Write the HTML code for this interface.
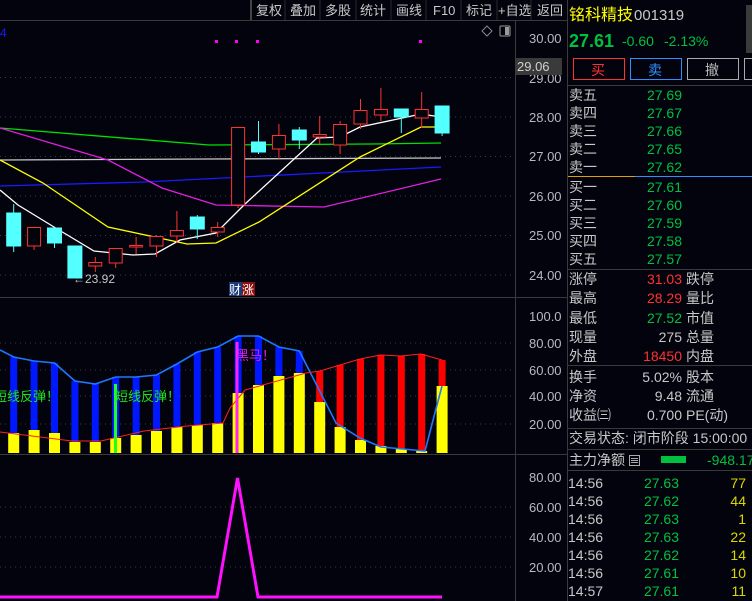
<!DOCTYPE html>
<html><head><meta charset="utf-8"><style>
html,body{margin:0;padding:0;background:#03030d;width:752px;height:601px;overflow:hidden}
svg{display:block}
text{font-family:"Liberation Sans","Noto Sans CJK SC",sans-serif}
</style></head><body>
<svg width="752" height="601" viewBox="0 0 752 601" xmlns="http://www.w3.org/2000/svg">
<rect width="752" height="601" fill="#03030d"/>
<!-- toolbar -->
<line x1="0" y1="20.5" x2="567" y2="20.5" stroke="#3a3a3a"/>
<line x1="251" y1="0" x2="251" y2="20" stroke="#444" stroke-width="2"/>
<g fill="#c8c8c8" font-size="13">
<text x="256" y="15">复权</text><text x="290" y="15">叠加</text><text x="325" y="15">多股</text><text x="360" y="15">统计</text><text x="396" y="15">画线</text><text x="433" y="15">F10</text><text x="466" y="15">标记</text><text x="498" y="15">+自选</text><text x="537" y="15">返回</text>
</g>
<g stroke="#2a2a2a"><line x1="285" y1="0" x2="285" y2="20"/><line x1="320" y1="0" x2="320" y2="20"/><line x1="356" y1="0" x2="356" y2="20"/><line x1="391" y1="0" x2="391" y2="20"/><line x1="426" y1="0" x2="426" y2="20"/><line x1="461" y1="0" x2="461" y2="20"/><line x1="497" y1="0" x2="497" y2="20"/><line x1="531" y1="0" x2="531" y2="20"/></g>
<text x="0" y="37" fill="#1a1aff" font-size="12">4</text>
<!-- axis divider -->
<line x1="515.5" y1="20" x2="515.5" y2="601" stroke="#3a3a3a"/>
<line x1="0" y1="297.5" x2="567" y2="297.5" stroke="#3a3a3a"/>
<line x1="0" y1="454.5" x2="567" y2="454.5" stroke="#3a3a3a"/>
<!-- icons -->
<path d="M487 26 L492 31 L487 36 L482 31 Z" fill="none" stroke="#888"/>
<rect x="500" y="26" width="10" height="10" fill="none" stroke="#999" rx="1"/><rect x="505" y="27" width="4" height="8" fill="#999"/>
<!-- grid -->
<g stroke="#3a3a3a" stroke-dasharray="1,4">
<line x1="0" y1="77.5" x2="512" y2="77.5"/><line x1="0" y1="117" x2="512" y2="117"/><line x1="0" y1="156.5" x2="512" y2="156.5"/><line x1="0" y1="196" x2="512" y2="196"/><line x1="0" y1="235.5" x2="512" y2="235.5"/><line x1="0" y1="275" x2="512" y2="275"/>
<line x1="0" y1="343" x2="512" y2="343"/><line x1="0" y1="370" x2="512" y2="370"/><line x1="0" y1="396" x2="512" y2="396"/><line x1="0" y1="424" x2="512" y2="424"/>
<line x1="0" y1="507" x2="512" y2="507"/><line x1="0" y1="537" x2="512" y2="537"/><line x1="0" y1="567" x2="512" y2="567"/>
</g>
<g fill="#b8b8c0" font-size="13">
<text x="529" y="43">30.00</text><text x="529" y="122">28.00</text><text x="529" y="161">27.00</text><text x="529" y="201">26.00</text><text x="529" y="240">25.00</text><text x="529" y="280">24.00</text>
<text x="529" y="321">100.0</text><text x="529" y="348">80.00</text><text x="529" y="375">60.00</text><text x="529" y="401">40.00</text><text x="529" y="429">20.00</text>
<text x="529" y="482">80.00</text><text x="529" y="512">60.00</text><text x="529" y="542">40.00</text><text x="529" y="572">20.00</text>
</g>
<text x="529" y="83" fill="#b8b8c0" font-size="13">29.00</text>
<rect x="516" y="58" width="46" height="17" fill="#3a3a3a"/>
<text x="517" y="71" fill="#d0d0d0" font-size="13">29.06</text>
<!-- magenta dots -->
<g fill="#ff00ff"><rect x="215" y="40" width="3" height="3"/><rect x="235" y="40" width="3" height="3"/><rect x="256" y="40" width="3" height="3"/><rect x="419" y="40" width="3" height="3"/></g>
<!-- MAs -->
<g fill="none" stroke-width="1.3">
<polyline stroke="#00e000" points="0,128 209,145 371,144 441,143"/>
<polyline stroke="#c8c8c8" points="0,160 207,159 441,158"/>
<polyline stroke="#1a1aff" points="0,186 144,182 441,167"/>
<polyline stroke="#e020e0" points="0,128 108,160 162,188 216,205 324,207 441,179"/>
<polyline stroke="#ffff00" points="0,160 43,183 108,227 187,244 216,243 259,222 360,157 421,127 441,127"/>
<polyline stroke="#ffffff" points="0,190 18,205 54,227 94,251 133,255 155,254 180,240 216,233 245,204 317,138 340,137 360,127 421,114 441,117"/>
</g>
<!-- candles -->
<g stroke="#54ffff" fill="#54ffff">
<line x1="13.7" y1="204" x2="13.7" y2="252"/><rect x="6.7" y="213" width="14" height="33"/>
<line x1="54.5" y1="228" x2="54.5" y2="248"/><rect x="47.5" y="228" width="14" height="15"/>
<line x1="74.9" y1="246" x2="74.9" y2="278"/><rect x="67.9" y="246" width="14" height="32"/>
<line x1="197.3" y1="215" x2="197.3" y2="239"/><rect x="190.3" y="217" width="14" height="12"/>
<line x1="258.5" y1="121" x2="258.5" y2="154"/><rect x="251.5" y="142" width="14" height="10"/>
<line x1="299.3" y1="127" x2="299.3" y2="149"/><rect x="292.3" y="130" width="14" height="10"/>
<line x1="401.3" y1="109" x2="401.3" y2="133"/><rect x="394.3" y="109" width="14" height="8"/>
<line x1="442.1" y1="106" x2="442.1" y2="136"/><rect x="435.1" y="106" width="14" height="27"/>
</g>
<g stroke="#ff3232" fill="#03030d">
<line x1="34.1" y1="227" x2="34.1" y2="250"/><rect x="27.6" y="227.5" width="13" height="18.5"/>
<line x1="95.3" y1="257" x2="95.3" y2="272"/><rect x="88.8" y="262.5" width="13" height="3.5"/>
<line x1="115.7" y1="248" x2="115.7" y2="268"/><rect x="109.2" y="248.5" width="13" height="14.5"/>
<line x1="136.1" y1="237" x2="136.1" y2="254"/><rect x="129.6" y="245.5" width="13" height="1.5"/>
<line x1="156.5" y1="235" x2="156.5" y2="257"/><rect x="150" y="236.5" width="13" height="9.5"/>
<line x1="176.9" y1="211" x2="176.9" y2="243"/><rect x="170.4" y="230.5" width="13" height="5.5"/>
<line x1="217.7" y1="222" x2="217.7" y2="237"/><rect x="211.2" y="227.5" width="13" height="4.5"/>
<line x1="238.1" y1="205" x2="238.1" y2="208"/><rect x="231.6" y="127.5" width="13" height="77.5"/>
<line x1="278.9" y1="124" x2="278.9" y2="159"/><rect x="272.4" y="135.5" width="13" height="13.5"/>
<line x1="319.7" y1="116" x2="319.7" y2="144"/><rect x="313.2" y="134.5" width="13" height="2.5"/>
<line x1="340.1" y1="121" x2="340.1" y2="154"/><rect x="333.6" y="124.5" width="13" height="20.5"/>
<line x1="360.5" y1="99" x2="360.5" y2="129"/><rect x="354" y="110.5" width="13" height="13.5"/>
<line x1="380.9" y1="88" x2="380.9" y2="121"/><rect x="374.4" y="109.5" width="13" height="5.5"/>
<line x1="421.7" y1="92" x2="421.7" y2="128"/><rect x="415.2" y="109.5" width="13" height="8.5"/>
</g>
<text x="73" y="283" fill="#c8c8c8" font-size="12">←23.92</text>
<rect x="229" y="282" width="13" height="14" fill="#1a3a7a"/><rect x="242" y="282" width="13" height="14" fill="#8a1010"/>
<text x="229" y="294" fill="#fff" font-size="12">财</text><text x="242" y="294" fill="#fff" font-size="12">涨</text>
<!-- panel 2 -->
<g fill="#0018ff">
<rect x="10.2" y="357" width="7" height="76"/><rect x="30.6" y="361" width="7" height="69"/><rect x="51" y="363" width="7" height="70"/><rect x="71.4" y="381" width="7" height="61"/><rect x="91.8" y="384" width="7" height="58"/><rect x="112.2" y="377" width="7" height="61"/><rect x="132.6" y="377" width="7" height="58"/><rect x="153" y="375" width="7" height="56"/><rect x="173.4" y="364" width="7" height="63"/><rect x="193.8" y="352" width="7" height="73"/><rect x="214.2" y="347" width="7" height="76"/><rect x="234.6" y="336" width="7" height="57"/><rect x="255" y="336" width="7" height="49"/><rect x="275.4" y="347" width="7" height="29"/><rect x="295.8" y="351" width="7" height="22"/>
</g>
<g fill="#ff0000">
<rect x="316.2" y="371" width="7" height="31"/><rect x="336.6" y="365" width="7" height="62"/><rect x="357" y="359" width="7" height="81"/><rect x="377.4" y="355" width="7" height="91"/><rect x="397.8" y="356" width="7" height="93"/><rect x="418.2" y="354" width="7" height="97"/><rect x="438.6" y="360" width="7" height="26"/>
</g>
<g fill="#ffff00">
<rect x="8.2" y="433" width="11" height="20"/><rect x="28.6" y="430" width="11" height="23"/><rect x="49" y="433" width="11" height="20"/><rect x="69.4" y="442" width="11" height="11"/><rect x="89.8" y="442" width="11" height="11"/><rect x="110.2" y="438" width="11" height="15"/><rect x="130.6" y="435" width="11" height="18"/><rect x="151" y="431" width="11" height="22"/><rect x="171.4" y="427" width="11" height="26"/><rect x="191.8" y="425" width="11" height="28"/><rect x="212.2" y="423" width="11" height="30"/><rect x="232.6" y="393" width="11" height="60"/><rect x="253" y="385" width="11" height="68"/><rect x="273.4" y="376" width="11" height="77"/><rect x="293.8" y="373" width="11" height="80"/><rect x="314.2" y="402" width="11" height="51"/><rect x="334.6" y="427" width="11" height="26"/><rect x="355" y="440" width="11" height="13"/><rect x="375.4" y="446" width="11" height="7"/><rect x="395.8" y="449" width="11" height="4"/><rect x="416.2" y="451" width="11" height="2"/><rect x="436.6" y="386" width="11" height="67"/>
</g>
<polyline fill="none" stroke="#1e78ff" stroke-width="1.6" points="0,350 13.7,357 34.1,361 54.5,363 74.9,381 95.3,384 115.7,377 136.1,377 156.5,375 176.9,364 197.3,352 217.7,347 238.1,336 258.5,336 278.9,347 299.3,351 336,423 360,438 381,447 403,449 425,451 437,405 442,386"/>
<polyline fill="none" stroke="#ff2020" stroke-width="1" points="0,432 72,441 101,441 144,431 187,426 223,423 230,408 245,390 306,373 320,371 340,365 360,359 380,355 401,356 421,354 442,360"/>
<rect x="114" y="384" width="3" height="69" fill="#20ff20"/>
<rect x="235.5" y="342" width="3" height="111" fill="#ff20ff"/>
<g font-size="13" fill="#20e020"><text x="-6" y="401">短线反弹！</text><text x="115" y="401">短线反弹！</text></g>
<text x="236" y="360" font-size="13" fill="#e020e0">黑马！</text>
<!-- panel 3 -->
<polyline fill="none" stroke="#ff10ff" stroke-width="3" points="0,597 217,597 237.5,478 258,597 442,597"/>
<!-- right panel -->
<line x1="567.5" y1="0" x2="567.5" y2="601" stroke="#3a3a3a"/>
<rect x="746" y="5" width="6" height="48" fill="#3a3a3a"/>
<text x="569" y="20" fill="#ffff00" font-size="16">铭科精技</text>
<text x="634" y="20" fill="#c8c8c8" font-size="15">001319</text>
<text x="569" y="47" fill="#00c040" font-size="18" font-weight="bold">27.61</text>
<text x="622" y="46" fill="#00c040" font-size="14">-0.60</text><text x="664" y="46" fill="#00c040" font-size="14">-2.13%</text>
<rect x="573.5" y="58.5" width="51" height="21" fill="none" stroke="#ff3232"/><text x="591" y="75" fill="#ff3232" font-size="14">买</text>
<rect x="630.5" y="58.5" width="51" height="21" fill="none" stroke="#3090ff"/><text x="648" y="75" fill="#3090ff" font-size="14">卖</text>
<rect x="687.5" y="58.5" width="51" height="21" fill="none" stroke="#aaa"/><text x="705" y="75" fill="#bbb" font-size="14">撤</text>
<rect x="744.5" y="58.5" width="10" height="21" fill="none" stroke="#aaa"/>
<line x1="568" y1="85.5" x2="752" y2="85.5" stroke="#3a3a3a"/>
<g font-size="14" fill="#c8c8c8">
<text x="569" y="100">卖五</text><text x="569" y="118">卖四</text><text x="569" y="136">卖三</text><text x="569" y="154">卖二</text><text x="569" y="172">卖一</text>
<text x="569" y="192">买一</text><text x="569" y="210">买二</text><text x="569" y="228">买三</text><text x="569" y="246">买四</text><text x="569" y="264">买五</text>
</g>
<g font-size="14" fill="#00c040" text-anchor="end">
<text x="682" y="100">27.69</text><text x="682" y="118">27.67</text><text x="682" y="136">27.66</text><text x="682" y="154">27.65</text><text x="682" y="172">27.62</text>
<text x="682" y="192">27.61</text><text x="682" y="210">27.60</text><text x="682" y="228">27.59</text><text x="682" y="246">27.58</text><text x="682" y="264">27.57</text>
</g>
<line x1="568" y1="176.5" x2="635" y2="176.5" stroke="#e0a000"/><line x1="635" y1="176.5" x2="752" y2="176.5" stroke="#3090ff"/>
<line x1="568" y1="269.5" x2="752" y2="269.5" stroke="#3a3a3a"/>
<g font-size="14" fill="#c8c8c8">
<text x="569" y="284">涨停</text><text x="686" y="284">跌停</text>
<text x="569" y="303">最高</text><text x="686" y="303">量比</text>
<text x="569" y="323">最低</text><text x="686" y="323">市值</text>
<text x="569" y="342">现量</text><text x="686" y="342">总量</text>
<text x="569" y="361">外盘</text><text x="686" y="361">内盘</text>
<text x="569" y="382">换手</text><text x="686" y="382">股本</text>
<text x="569" y="401">净资</text><text x="686" y="401">流通</text>
<text x="569" y="420">收益㈢</text><text x="686" y="420">PE(动)</text>
<text x="569" y="443">交易状态: 闭市阶段 15:00:00</text>
<text x="569" y="465">主力净额</text>
</g>
<g font-size="14" text-anchor="end">
<text x="682" y="284" fill="#ff3232">31.03</text><text x="682" y="303" fill="#ff3232">28.29</text><text x="682" y="323" fill="#00c040">27.52</text><text x="682" y="342" fill="#c8c8c8">275</text><text x="682" y="361" fill="#ff3232">18450</text>
<text x="682" y="382" fill="#c8c8c8">5.02%</text><text x="682" y="401" fill="#c8c8c8">9.48</text><text x="682" y="420" fill="#c8c8c8">0.700</text>
</g>
<line x1="568" y1="365.5" x2="752" y2="365.5" stroke="#3a3a3a"/>
<line x1="568" y1="428.5" x2="752" y2="428.5" stroke="#3a3a3a"/>
<line x1="568" y1="449.5" x2="752" y2="449.5" stroke="#3a3a3a"/>
<rect x="629.5" y="455.5" width="10" height="10" fill="none" stroke="#aaa"/><line x1="631" y1="458.5" x2="638" y2="458.5" stroke="#aaa"/><line x1="631" y1="460.5" x2="638" y2="460.5" stroke="#aaa"/><line x1="631" y1="462.5" x2="638" y2="462.5" stroke="#aaa"/>
<rect x="661" y="456" width="25" height="7" fill="#00c040"/>
<text x="707" y="465" fill="#00c040" font-size="14">-948.17</text>
<line x1="568" y1="470.5" x2="752" y2="470.5" stroke="#3a3a3a"/>
<g font-size="14" fill="#c8c8c8">
<text x="568" y="488">14:56</text><text x="568" y="506">14:56</text><text x="568" y="524">14:56</text><text x="568" y="542">14:56</text><text x="568" y="560">14:56</text><text x="568" y="578">14:56</text><text x="568" y="596">14:57</text>
</g>
<g font-size="14" fill="#00c040" text-anchor="end">
<text x="679" y="488">27.63</text><text x="679" y="506">27.62</text><text x="679" y="524">27.63</text><text x="679" y="542">27.63</text><text x="679" y="560">27.62</text><text x="679" y="578">27.61</text><text x="679" y="596">27.61</text>
</g>
<g font-size="14" fill="#d8d800" text-anchor="end">
<text x="746" y="488">77</text><text x="746" y="506">44</text><text x="746" y="524">1</text><text x="746" y="542">22</text><text x="746" y="560">14</text><text x="746" y="578">10</text><text x="746" y="596">11</text>
</g>
</svg>
</body></html>
